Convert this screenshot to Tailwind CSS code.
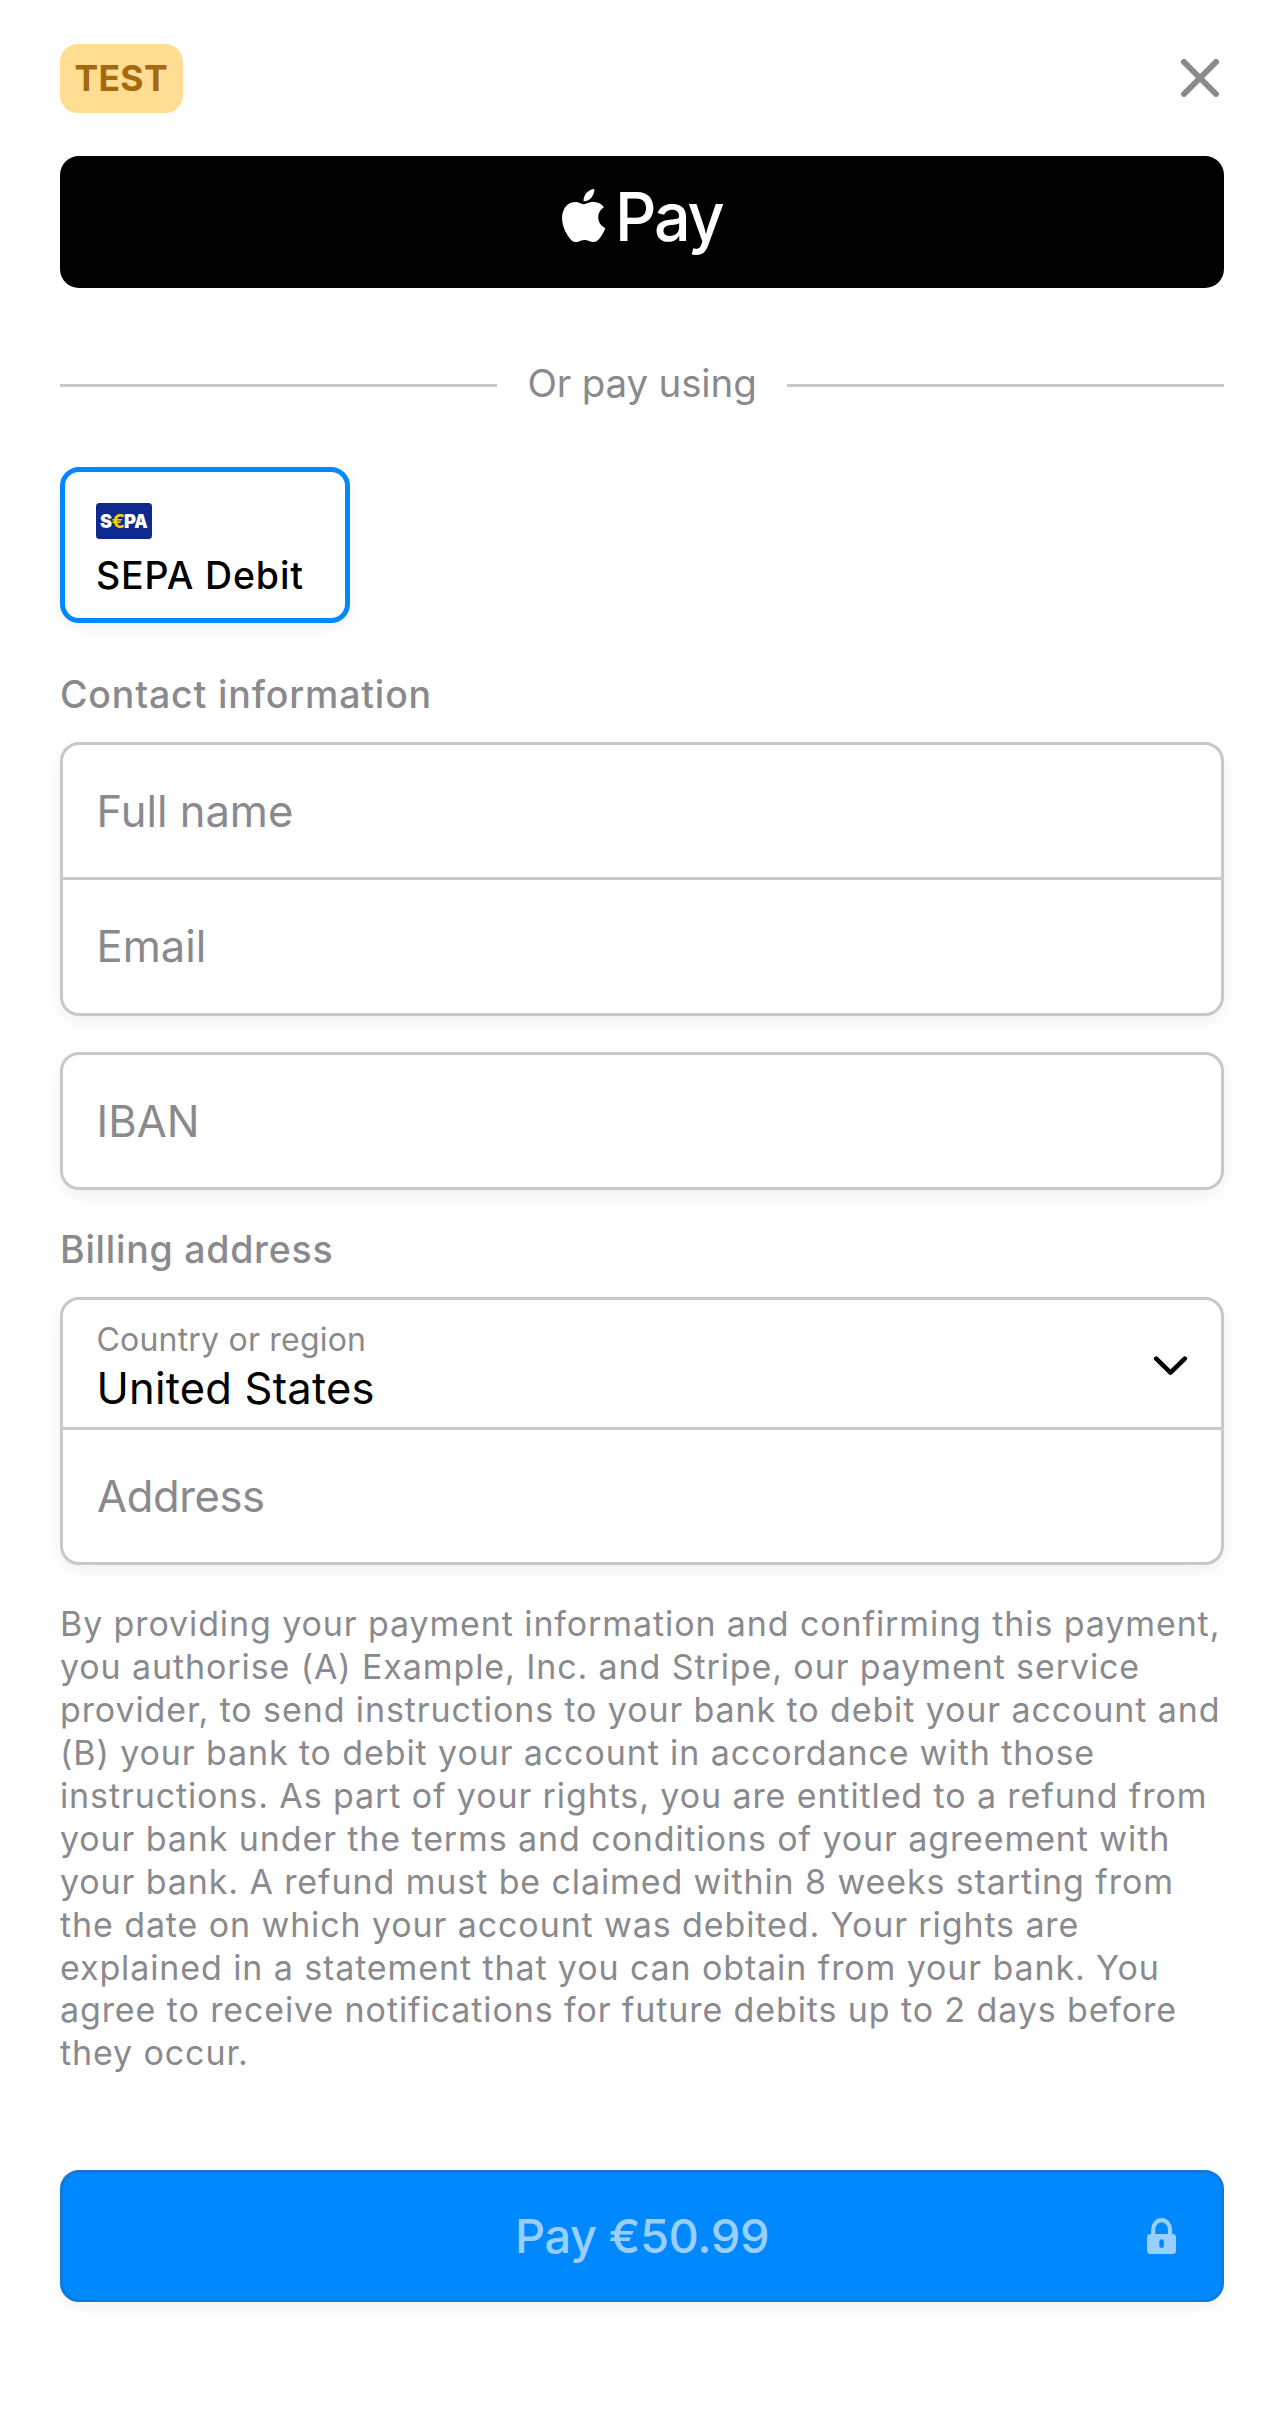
<!DOCTYPE html>
<html lang="en">
<head>
<meta charset="utf-8">
<title>Checkout</title>
<script src="https://cdn.jsdelivr.net/npm/@tailwindcss/browser@4"></script>
</head>
<body class="bg-white font-[Inter,sans-serif] text-[#8a8a8e]">
<main class="flex h-[2422px] w-[1284px] flex-col px-[60px] pt-11">

  <header class="flex h-[69px] items-center justify-between">
    <span class="flex h-[69px] w-[123px] items-center rounded-[18px] bg-[#ffdd93] pl-[14.5px] text-[35.5px] leading-none font-bold tracking-[0.3px] text-[#a6690f]">TEST</span>
    <button aria-label="Close" class="mr-[5px] mb-[2px]">
      <svg class="block" width="38" height="38" viewBox="0 0 38 38" fill="none" stroke="#8a8a8e" stroke-width="6" stroke-linecap="round"><path d="M3 3L35 35M35 3L3 35"/></svg>
    </button>
  </header>

  <button aria-label="Apple Pay" class="mt-[43px] flex h-[132px] items-start rounded-[19px] bg-black pl-[502px] text-white">
    <svg class="mt-[33px] block" width="43.4" height="53.2" viewBox="2.2 0 19.6 24" fill="currentColor"><path d="M12.152 6.896c-.948 0-2.415-1.078-3.96-1.04-2.04.027-3.91 1.183-4.961 3.014-2.117 3.675-.546 9.103 1.519 12.09 1.013 1.454 2.208 3.09 3.792 3.039 1.52-.065 2.09-.987 3.935-.987 1.831 0 2.35.987 3.96.948 1.637-.026 2.676-1.48 3.676-2.948 1.156-1.688 1.636-3.325 1.662-3.415-.039-.013-3.182-1.221-3.22-4.857-.026-3.04 2.48-4.494 2.597-4.559-1.429-2.09-3.623-2.324-4.39-2.376-2-.156-3.675 1.09-4.61 1.09zM15.53 3.83c.843-1.012 1.4-2.427 1.245-3.83-1.207.052-2.662.805-3.532 1.818-.78.896-1.454 2.338-1.273 3.714 1.338.104 2.715-.688 3.559-1.701"/></svg>
    <span class="mt-[21px] ml-[9.5px] origin-left scale-x-[0.965] text-[67px] leading-[80px] font-medium tracking-[-2.3px]">Pay</span>
  </button>

  <div class="mt-[74px] flex h-[47px] items-center">
    <div class="h-[3px] flex-1 bg-[#c9c9cd]"></div>
    <span class="w-[290px] pb-1.5 text-center text-[38.5px] leading-[46px] tracking-[-0.15px]">Or pay using</span>
    <div class="h-[3px] flex-1 bg-[#c9c9cd]"></div>
  </div>

  <div class="mt-[58px] h-[156px] w-[290px] rounded-[19px] border-[5px] border-[#0088ff] pt-[31px] pl-[31px] shadow-[0_6px_18px_rgba(0,0,0,0.05)]">
    <svg class="block" width="56" height="36" viewBox="0 0 56 36" font-family="Inter, sans-serif" font-weight="900" font-size="18.4">
      <rect width="56" height="36" rx="3.5" fill="#10298e"/>
      <text x="4" y="25" fill="#fff" textLength="12" lengthAdjust="spacingAndGlyphs">S</text>
      <text x="28" y="25" fill="#fff" textLength="12" lengthAdjust="spacingAndGlyphs">P</text>
      <text x="38.2" y="25" fill="#fff" textLength="13.4" lengthAdjust="spacingAndGlyphs">A</text>
      <text x="15.5" y="25" fill="#ffcc00" font-weight="700" textLength="13.5" lengthAdjust="spacingAndGlyphs">€</text>
    </svg>
    <div class="mt-[14px] text-[37.5px] leading-[46px] font-medium tracking-[0.88px] whitespace-nowrap text-black">SEPA Debit</div>
  </div>

  <h2 class="mt-[49px] text-[37.5px] leading-[46px] font-medium tracking-[0.83px]">Contact information</h2>

  <div class="mt-6 flex h-[274px] flex-col rounded-[19px] border-[3px] border-[#c7c7cc] bg-white text-[43.5px] leading-[52px] shadow-[0_6px_18px_rgba(0,0,0,0.06)]">
    <div class="flex h-[135px] items-center border-b-[3px] border-[#c7c7cc] pl-[33.5px]">Full name</div>
    <div class="flex flex-1 items-center pb-[2px] pl-[33.5px]">Email</div>
  </div>

  <div class="mt-9 flex h-[138px] items-center rounded-[19px] border-[3px] border-[#c7c7cc] bg-white pl-[33.5px] text-[43.5px] leading-[52px] shadow-[0_6px_18px_rgba(0,0,0,0.06)]">IBAN</div>

  <h2 class="mt-[37px] text-[37.5px] leading-[46px] font-medium tracking-[0.75px]">Billing address</h2>

  <div class="mt-6 flex h-[268px] flex-col rounded-[19px] border-[3px] border-[#c7c7cc] bg-white shadow-[0_6px_18px_rgba(0,0,0,0.06)]">
    <div class="flex h-[130px] justify-between border-b-[3px] border-[#c7c7cc] pr-[33.5px] pl-[33.5px]">
      <div class="pt-5">
        <div class="text-[32px] leading-10 tracking-[0.2px]">Country or region</div>
        <div class="mt-[3px] text-[43.5px] leading-[51px] tracking-[0.2px] text-black">United States</div>
      </div>
      <svg class="mt-[55px] block" width="36" height="22" viewBox="0 0 36 22" fill="none" stroke="#000" stroke-width="4.6" stroke-linecap="round" stroke-linejoin="round"><path d="M4.2 3.6L18.5 17.6L32.8 3.6"/></svg>
    </div>
    <div class="flex flex-1 items-center pl-[34px] text-[43.5px] leading-[52px] tracking-[-0.37px]">Address</div>
  </div>

  <p class="mt-[38px] h-[472px] text-[34px] leading-[42.93px] tracking-[0.89px] whitespace-nowrap">By providing your payment information and confirming this payment,<br>you authorise (A) Example, Inc. and Stripe, our payment service<br>provider, to send instructions to your bank to debit your account and<br>(B) your bank to debit your account in accordance with those<br>instructions. As part of your rights, you are entitled to a refund from<br>your bank under the terms and conditions of your agreement with<br>your bank. A refund must be claimed within 8 weeks starting from<br>the date on which your account was debited. Your rights are<br>explained in a statement that you can obtain from your bank. You<br>agree to receive notifications for future debits up to 2 days before<br>they occur.</p>

  <button class="mt-[95px] grid h-[132px] grid-cols-[1fr_auto_1fr] items-center rounded-[19px] border-[3px] border-[#0f7ade] bg-[#0088ff] text-[#99cfff] shadow-[0_6px_18px_rgba(0,0,0,0.05)]">
    <span class="col-start-2 text-[47px] leading-[56px] font-medium tracking-[-0.4px]">Pay €50.99</span>
    <svg class="mr-[45px] block justify-self-end" width="29" height="36" viewBox="0 0 29 36"><path d="M6.2 18V11.5a8.4 9.4 0 0 1 16.8 0V18" fill="none" stroke="#99cfff" stroke-width="4.2"/><path fill="#99cfff" fill-rule="evenodd" d="M3.5 16H25.5A3.5 3.5 0 0 1 29 19.500V32.500A3.500 3.500 0 0 1 25.500 36H3.500A3.500 3.500 0 0 1 0 32.500V19.500A3.500 3.500 0 0 1 3.500 16ZM14.600 21.300A2.300 2.300 0 0 0 12.300 23.600V27.700A2.300 2.300 0 0 0 16.900 27.700V23.600A2.300 2.300 0 0 0 14.600 21.300Z"/></svg>
  </button>
</main>
</body>
</html>
